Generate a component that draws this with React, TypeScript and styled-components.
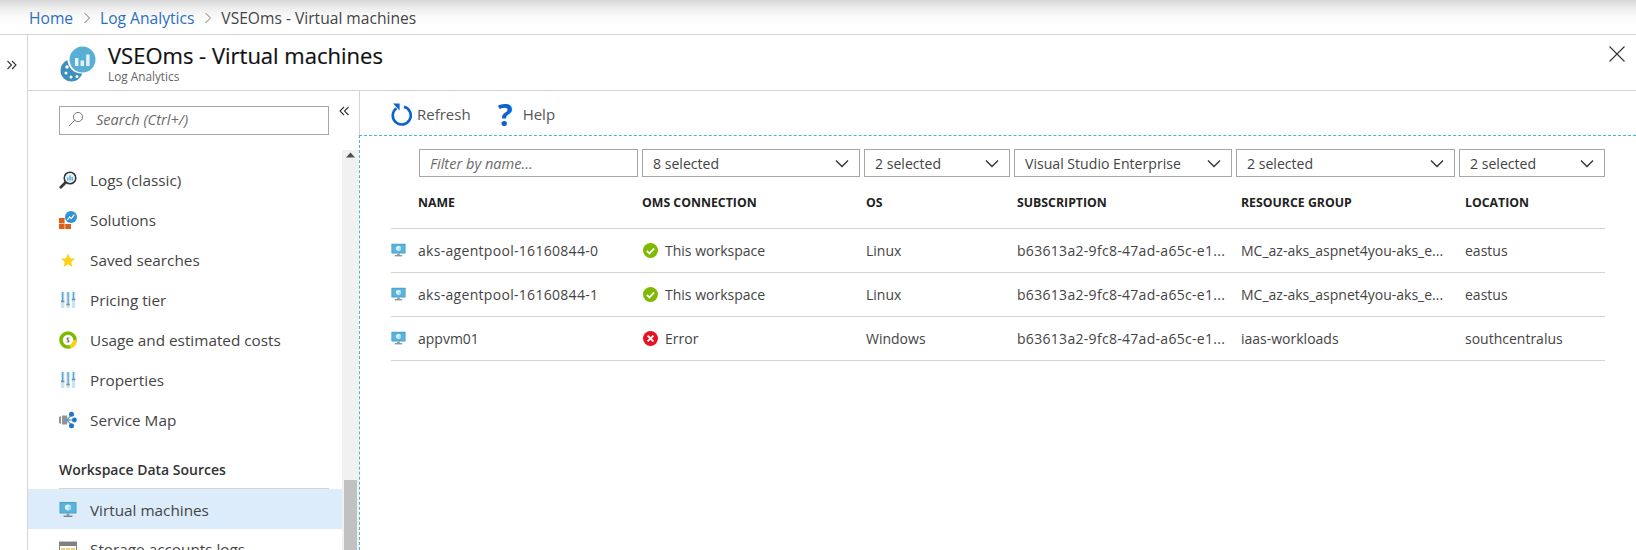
import React from "react";
import styled, { createGlobalStyle } from "styled-components";

const Global = createGlobalStyle`
  html, body { margin: 0; padding: 0; background: #fff; }
  body { font-family: "Open Sans", "Noto Sans", "Liberation Sans", sans-serif; color: #333; }
  * { box-sizing: border-box; }
`;

const Page = styled.div`
  width: 1636px;
  height: 550px;
  overflow: hidden;
  display: flex;
  flex-direction: column;
`;
const Breadcrumb = styled.nav`
  height: 35px;
  flex: none;
  display: flex;
  align-items: center;
  padding: 2px 0 0 29px;
  font-size: 15.6px;
  background: linear-gradient(#d6d6d6 0, #efefef 9px, #fbfbfb 18px, #fff 26px);
  border-bottom: 1px solid #d4d4d4;
`;
const Crumb = styled.span<{ $link?: boolean }>`
  color: ${(p) => (p.$link ? "#2a6fc4" : "#444")};
`;
const CrumbSep = styled.svg`
  width: 8px;
  height: 12px;
  margin: 0 9px 0 10px;
`;
const Shell = styled.div`
  flex: 1;
  display: flex;
  min-height: 0;
`;
const Strip = styled.div`
  width: 28px;
  flex: none;
  border-right: 1px solid #d4d4d4;
  padding: 19px 0 0 6px;
`;
const Panel = styled.div`
  flex: 1;
  display: flex;
  flex-direction: column;
  min-width: 0;
`;
const PanelHeader = styled.header`
  height: 56px;
  flex: none;
  display: flex;
  align-items: flex-start;
  border-bottom: 1px solid #d4d4d4;
  padding: 7px 11px 0 32px;
`;
const Logo = styled.svg`
  width: 36px;
  height: 36px;
  flex: none;
  margin: 4px 12px 0 0;
`;
const Titles = styled.div`
  flex: 1;
  display: flex;
  flex-direction: column;
`;
const Title = styled.h1`
  margin: 0;
  font-size: 22px;
  line-height: 26px;
  font-weight: 400;
  color: #111;
  -webkit-text-stroke: 0.2px #111;
`;
const Subtitle = styled.div`
  font-size: 11.8px;
  line-height: 16px;
  color: #666;
`;
const CloseIcon = styled.svg`
  width: 16px;
  height: 16px;
  margin: 4px 0 0 0;
`;
const Body = styled.div`
  flex: 1;
  display: flex;
  min-height: 0;
`;
const Sidebar = styled.aside`
  width: 331px;
  flex: none;
  display: flex;
  flex-direction: column;
  min-height: 0;
`;
const SearchRow = styled.div`
  height: 59px;
  flex: none;
  display: flex;
  align-items: flex-start;
  padding: 15px 0 0 31px;
`;
const SearchBox = styled.div`
  width: 270px;
  height: 29px;
  border: 1px solid #a6a6a6;
  display: flex;
  align-items: center;
  padding: 0 0 3px 8px;
  font-size: 14.6px;
  font-style: italic;
  color: #6b6b6b;
`;
const SearchIcon = styled.svg`
  width: 16px;
  height: 16px;
  margin-right: 12px;
`;
const Collapse = styled.svg`
  width: 12px;
  height: 12px;
  margin: -1px 0 0 9px;
`;
const SideLower = styled.div`
  flex: 1;
  display: flex;
  min-height: 0;
`;
const Menu = styled.div`
  flex: 1;
  padding-top: 10px;
  min-width: 0;
  overflow: hidden;
`;
const MenuItem = styled.div<{ $active?: boolean }>`
  height: 40px;
  display: flex;
  align-items: center;
  padding: ${(p) => (p.$active ? "1px" : "0")} 0 0 31px;
  font-size: 15.3px;
  color: #444;
  background: ${(p) => (p.$active ? "#dcecfb" : "transparent")};
`;
const MenuIconBox = styled.svg`
  width: 18px;
  height: 18px;
  flex: none;
  margin: 0 13px 0 0;
`;
const MenuHeading = styled.div`
  height: 49px;
  margin: 0 13px 0 31px;
  padding-top: 20px;
  border-bottom: 1px solid #d4d4d4;
  font-size: 14px;
  line-height: 20px;
  font-weight: 600;
  color: #333;
`;
const Scrollbar = styled.div`
  width: 17px;
  flex: none;
  background: #f1f1f1;
  display: flex;
  flex-direction: column;
  align-items: center;
`;
const ScrollArrow = styled.svg`
  width: 9px;
  height: 6px;
  margin-top: 2px;
`;
const ScrollThumb = styled.div`
  width: 13px;
  height: 70px;
  margin-top: auto;
  background: #c1c1c1;
`;
const Content = styled.main`
  flex: 1;
  min-width: 0;
  display: flex;
  flex-direction: column;
`;
const Toolbar = styled.div`
  height: 44px;
  flex: none;
  display: flex;
  align-items: center;
  padding: 1px 0 0 30px;
  border-left: 1px solid #d4d4d4;
  font-size: 15px;
  color: #555;
`;
const ToolButton = styled.div`
  display: flex;
  align-items: center;
  margin-right: 27px;
`;
const RefreshIcon = styled.svg`
  width: 22px;
  height: 24px;
  margin-right: 5px;
`;
const HelpGlyph = styled.span`
  width: 15px;
  margin-right: 10px;
  font-size: 31px;
  line-height: 30px;
  font-weight: 700;
  color: #0b63ce;
  text-align: center;
`;
const Pane = styled.section`
  flex: 1;
  border-top: 1px dashed #45b6d6;
  border-left: 1px dashed #45b6d6;
  padding: 13px 0 0 31px;
`;
const Filters = styled.div`
  display: flex;
  gap: 4px;
  margin-left: 28px;
  height: 28px;
`;
const FilterInput = styled.div`
  width: 219px;
  border: 1px solid #a6a6a6;
  display: flex;
  align-items: center;
  padding: 0 0 1px 10px;
  font-size: 14.6px;
  font-style: italic;
  color: #6b6b6b;
`;
const Select = styled.div<{ $w: number }>`
  width: ${(p) => p.$w}px;
  border: 1px solid #a6a6a6;
  display: flex;
  align-items: center;
  justify-content: space-between;
  padding: 0 10px 0 10px;
  font-size: 14.1px;
  color: #444;
  white-space: nowrap;
`;
const Chevron = styled.svg`
  width: 14px;
  height: 9px;
  flex: none;
`;
const Table = styled.div`
  width: 1214px;
`;
const cols = "27px 224px 224px 151px 224px 224px 140px";
const HeadRow = styled.div`
  display: grid;
  grid-template-columns: ${cols};
  height: 52px;
  align-items: center;
  border-bottom: 1px solid #d4d4d4;
  font-size: 12.3px;
  font-weight: 700;
  color: #222;
`;
const Row = styled.div`
  display: grid;
  grid-template-columns: ${cols};
  height: 44px;
  align-items: center;
  border-bottom: 1px solid #d4d4d4;
  font-size: 14px;
  color: #444;
`;
const Cell = styled.div<{ $col?: number; $digits?: boolean }>`
  min-width: 0;
  white-space: nowrap;
  ${(p) => (p.$col ? `grid-column: ${p.$col};` : "")}
  ${(p) => (p.$digits ? "letter-spacing: 0.3px;" : "")}
`;
const Status = styled.div`
  display: flex;
  align-items: center;
  gap: 7px;
  margin-left: 1px;
`;
const SmallIcon = styled.svg`
  width: 15px;
  height: 15px;
  display: block;
`;

const VmShape = () => (
  <>
    <rect x="0.5" y="1" width="17" height="11.5" rx="0.6" fill="#4a9fd0" />
    <rect x="1.5" y="2" width="15" height="9.5" fill="#59b4d9" />
    <path d="M9 3.2l3 1.6v3.2l-3 1.8-3-1.8V4.8z" fill="#d9f0fa" />
    <path d="M9 6.4v3.4l3-1.8V4.8zM9 6.4L6 4.8" fill="#a9dcf0" />
    <rect x="7.5" y="12.5" width="3" height="2.2" fill="#8a9aa3" />
    <rect x="4.5" y="14.6" width="9" height="1.4" fill="#77858e" />
  </>
);

const Sliders = () => (
  <>
    <rect x="2" y="1" width="3.4" height="16" fill="#c6e4f1" />
    <rect x="7.4" y="1" width="3.4" height="16" fill="#c6e4f1" />
    <rect x="12.8" y="1" width="3.4" height="16" fill="#c6e4f1" />
    <path d="M3.7 1v9M9.1 1v12M14.5 1v7" stroke="#5fa8cf" strokeWidth="1.3" />
    <path d="M2 10.5h3.4M7.4 13.5h3.4M12.8 8.5h3.4" stroke="#7c8c96" strokeWidth="1.3" />
  </>
);

const icons: Record<string, React.ReactNode> = {
  logs: (
    <>
      <path d="M7.5 10.5L1.8 16.2" stroke="#3a3a3a" strokeWidth="2.8" strokeLinecap="round" />
      <circle cx="11" cy="7" r="5.8" fill="#e3f2fa" stroke="#333" strokeWidth="1.5" />
      <path d="M8.8 6.5v3M11 4.5v5M13.2 6v3.5" stroke="#59a9d6" strokeWidth="1.4" />
    </>
  ),
  solutions: (
    <>
      <rect x="0" y="7" width="5.6" height="5.4" fill="#d9601a" />
      <rect x="0" y="13" width="5.6" height="5" fill="#d9601a" />
      <rect x="6.2" y="13" width="5.8" height="5" fill="#d9601a" />
      <circle cx="12" cy="6" r="6" fill="#2f93d5" />
      <path d="M8.4 9l2.3-3 1.6 1.6 3-4" stroke="#fff" strokeWidth="1.2" fill="none" />
    </>
  ),
  star: <path d="M9 2.6l2 4.6 5 .5-3.8 3.3 1.2 4.9L9 13.3 4.6 15.9l1.2-4.9L2 7.7l5-.5z" fill="#fcd116" />,
  pricing: <Sliders />,
  usage: (
    <>
      <circle cx="9" cy="9" r="7" fill="none" stroke="#7fba00" strokeWidth="3.6" />
      <path d="M16 9a7 7 0 0 1-5 6.7" fill="none" stroke="#fcd116" strokeWidth="3.6" />
      <path d="M10.4 7H8.2v2h1.6v2H7.6" fill="none" stroke="#3b3b3b" strokeWidth="0.8" />
    </>
  ),
  map: (
    <>
      <path d="M0 6l2-1v8l-2-1zM3 4.5h5.2v9H3z" fill="#8f9499" />
      <path d="M8 9l4.5-5.5M8 9h6M8 9l4.5 5.5" stroke="#3f87c6" strokeWidth="1.1" />
      <circle cx="12.5" cy="3.2" r="2.5" fill="#1f74c4" />
      <circle cx="15.4" cy="9" r="2.4" fill="#1f74c4" />
      <circle cx="12.5" cy="14.8" r="2.5" fill="#1f74c4" />
    </>
  ),
  vm: <VmShape />,
  storage: (
    <>
      <rect x="0.5" y="2" width="17" height="14" fill="#fff" stroke="#8a8a8a" />
      <rect x="0.5" y="2" width="17" height="4" fill="#7f7f7f" />
      <path d="M2 8h4v3H2zM7 8h4v3H7zM12 8h4v3h-4zM2 12h4v3H2zM7 12h4v3H7zM12 12h4v3h-4z" fill="#f5d27a" />
    </>
  ),
};

const menu = [
  ["logs", "Logs (classic)"],
  ["solutions", "Solutions"],
  ["star", "Saved searches"],
  ["pricing", "Pricing tier"],
  ["usage", "Usage and estimated costs"],
  ["pricing", "Properties"],
  ["map", "Service Map"],
];

const DownChevron = () => (
  <Chevron viewBox="0 0 14 9">
    <path d="M1 1.5l6 6 6-6" fill="none" stroke="#333" strokeWidth="1.4" />
  </Chevron>
);

const Ok = () => (
  <SmallIcon viewBox="0 0 15 15">
    <circle cx="7.5" cy="7.5" r="7.5" fill="#7fba00" />
    <path d="M3.8 7.8l2.6 2.6 4.8-5" fill="none" stroke="#fff" strokeWidth="1.8" />
  </SmallIcon>
);
const Err = () => (
  <SmallIcon viewBox="0 0 15 15">
    <circle cx="7.5" cy="7.5" r="7.5" fill="#e81123" />
    <path d="M4.6 4.6l5.8 5.8M10.4 4.6l-5.8 5.8" stroke="#fff" strokeWidth="2" />
  </SmallIcon>
);

const sub = "b63613a2-9fc8-47ad-a65c-e1...";
const mc = "MC_az-aks_aspnet4you-aks_e...";
const rows = [
  { name: "aks-agentpool-16160844-0", ok: true, os: "Linux", rg: mc, loc: "eastus" },
  { name: "aks-agentpool-16160844-1", ok: true, os: "Linux", rg: mc, loc: "eastus" },
  { name: "appvm01", ok: false, os: "Windows", rg: "iaas-workloads", loc: "southcentralus" },
];

export default function App() {
  return (
    <Page>
      <Global />
      <Breadcrumb>
        <Crumb $link>Home</Crumb>
        <CrumbSep viewBox="0 0 8 12"><path d="M1.5 1l5 5-5 5" fill="none" stroke="#777" /></CrumbSep>
        <Crumb $link>Log Analytics</Crumb>
        <CrumbSep viewBox="0 0 8 12"><path d="M1.5 1l5 5-5 5" fill="none" stroke="#777" /></CrumbSep>
        <Crumb>VSEOms - Virtual machines</Crumb>
      </Breadcrumb>
      <Shell>
        <Strip>
          <svg width="12" height="12" viewBox="0 0 12 12">
            <path d="M1.5 2l4 4-4 4M6 2l4 4-4 4" fill="none" stroke="#333" strokeWidth="1.1" />
          </svg>
        </Strip>
        <Panel>
          <PanelHeader>
            <Logo viewBox="0 0 36 36">
              <circle cx="11.5" cy="24.5" r="11" fill="#3e8fbd" />
              <circle cx="7" cy="21" r="1.7" fill="#fff" />
              <circle cx="6" cy="27" r="1.5" fill="#fff" />
              <circle cx="11" cy="31" r="1.5" fill="#fff" />
              <circle cx="17" cy="30.5" r="1.5" fill="#fff" />
              <circle cx="21.5" cy="13.5" r="14" fill="#fff" />
              <path d="M22.5 0.5a13 13 0 1 1-13 13c0-3 1-5.5 2.5-7.5 2.5-3.5 6.2-5.5 10.5-5.5z" fill="#59aed6" />
              <path d="M15 12h3.4v8H15zM20.6 14.5h3.4V20h-3.4zM26.2 8.5h3.4V20h-3.4z" fill="#e6f4fa" />
            </Logo>
            <Titles>
              <Title>VSEOms - Virtual machines</Title>
              <Subtitle>Log Analytics</Subtitle>
            </Titles>
            <CloseIcon viewBox="0 0 16 16">
              <path d="M0.5 0.5l15 15M15.5 0.5l-15 15" stroke="#333" strokeWidth="1.1" />
            </CloseIcon>
          </PanelHeader>
          <Body>
            <Sidebar>
              <SearchRow>
                <SearchBox>
                  <SearchIcon viewBox="0 0 16 16">
                    <circle cx="10" cy="6" r="4.6" fill="none" stroke="#777" />
                    <path d="M6.6 9.4L1 15" stroke="#777" />
                  </SearchIcon>
                  Search (Ctrl+/)
                </SearchBox>
                <Collapse viewBox="0 0 12 12">
                  <path d="M6 2L2 6l4 4M10.5 2l-4 4 4 4" fill="none" stroke="#333" strokeWidth="1.1" />
                </Collapse>
              </SearchRow>
              <SideLower>
                <Menu>
                  {menu.map(([icon, label]) => (
                    <MenuItem key={label}>
                      <MenuIconBox viewBox="0 0 18 18">{icons[icon]}</MenuIconBox>
                      {label}
                    </MenuItem>
                  ))}
                  <MenuHeading>Workspace Data Sources</MenuHeading>
                  <MenuItem $active>
                    <MenuIconBox viewBox="0 0 18 18">{icons.vm}</MenuIconBox>
                    Virtual machines
                  </MenuItem>
                  <MenuItem>
                    <MenuIconBox viewBox="0 0 18 18">{icons.storage}</MenuIconBox>
                    Storage accounts logs
                  </MenuItem>
                </Menu>
                <Scrollbar>
                  <ScrollArrow viewBox="0 0 9 6"><path d="M4.5 0.5L9 5.5H0z" fill="#505050" /></ScrollArrow>
                  <ScrollThumb />
                </Scrollbar>
              </SideLower>
            </Sidebar>
            <Content>
              <Toolbar>
                <ToolButton>
                  <RefreshIcon viewBox="0 0 22 24">
                    <path d="M6.5 6.2a9 9 0 1 0 7.5-1.4" fill="none" stroke="#0b63ce" strokeWidth="2.6" />
                    <path d="M3 1.5h6.6v7z" fill="#0b63ce" />
                  </RefreshIcon>
                  Refresh
                </ToolButton>
                <ToolButton>
                  <HelpGlyph>?</HelpGlyph>
                  Help
                </ToolButton>
              </Toolbar>
              <Pane>
                <Table>
                  <Filters>
                    <FilterInput>Filter by name...</FilterInput>
                    <Select $w={218}>8 selected<DownChevron /></Select>
                    <Select $w={146}>2 selected<DownChevron /></Select>
                    <Select $w={218}>Visual Studio Enterprise<DownChevron /></Select>
                    <Select $w={219}>2 selected<DownChevron /></Select>
                    <Select $w={146}>2 selected<DownChevron /></Select>
                  </Filters>
                  <HeadRow>
                    <Cell $col={2}>NAME</Cell>
                    <Cell>OMS CONNECTION</Cell>
                    <Cell>OS</Cell>
                    <Cell>SUBSCRIPTION</Cell>
                    <Cell>RESOURCE GROUP</Cell>
                    <Cell>LOCATION</Cell>
                  </HeadRow>
                  {rows.map((r) => (
                    <Row key={r.name}>
                      <Cell>
                        <SmallIcon viewBox="0 0 18 18">{icons.vm}</SmallIcon>
                      </Cell>
                      <Cell $digits={r.ok}>{r.name}</Cell>
                      <Cell>
                        <Status>
                          {r.ok ? <Ok /> : <Err />}
                          {r.ok ? "This workspace" : "Error"}
                        </Status>
                      </Cell>
                      <Cell>{r.os}</Cell>
                      <Cell $digits>{sub}</Cell>
                      <Cell>{r.rg}</Cell>
                      <Cell>{r.loc}</Cell>
                    </Row>
                  ))}
                </Table>
              </Pane>
            </Content>
          </Body>
        </Panel>
      </Shell>
    </Page>
  );
}
